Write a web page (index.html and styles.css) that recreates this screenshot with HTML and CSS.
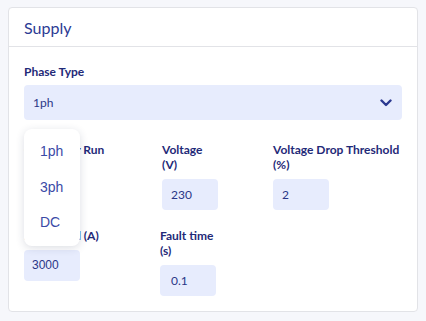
FILE: index.html
```html
<!DOCTYPE html>
<html>
<head>
<meta charset="utf-8">
<link rel="stylesheet" href="styles.css">
</head>
<body>
<div class="card">
  <div class="card-header">Supply</div>
  <div class="card-body">
    <div class="field-phase">
      <div class="label">Phase Type</div>
      <div class="select">
        <span>1ph</span>
        <svg class="chev" width="12" height="8" viewBox="0 0 12 8"><path d="M1.5 1.5 L6 6 L10.5 1.5" fill="none" stroke="#2b3990" stroke-width="2.4" stroke-linecap="round" stroke-linejoin="round"/></svg>
      </div>
      <div class="menu">
        <div class="item">1ph</div>
        <div class="item">3ph</div>
        <div class="item">DC</div>
      </div>
    </div>
    <div class="grid">
      <div class="field">
        <div class="label">Conductor Run</div>
        <div class="input">1</div>
      </div>
      <div class="field">
        <div class="label">Voltage<br>(V)</div>
        <div class="input">230</div>
      </div>
      <div class="field">
        <div class="label">Voltage Drop Threshold<br>(%)</div>
        <div class="input">2</div>
      </div>
      <div class="field">
        <div class="label">Fault Level (A)</div>
        <div class="input">3000</div>
      </div>
      <div class="field shift">
        <div class="label">Fault time<br>(s)</div>
        <div class="input">0.1</div>
      </div>
    </div>
  </div>
</div>
</body>
</html>
```

FILE: styles.css
```css
html, body {
  margin: 0;
  padding: 0;
  background: #f6f7fb;
  font-family: Lato, "Liberation Sans", sans-serif;
}
body {
  padding: 7px 8px 0 8px;
}
.card {
  width: 408px;
  height: 303px;
  background: #fff;
  border: 1px solid #e2e3e7;
  border-radius: 4px;
  box-sizing: content-box;
}
.card-header {
  height: 38px;
  border-bottom: 1px solid #e2e3e7;
  padding-left: 15px;
  font-size: 16px;
  color: #2b3a94;
  line-height: 40px;
}
.card-body {
  padding: 16px 15px 16px 15px;
}
.field-phase {
  position: relative;
  z-index: 2;
}
.label {
  font-size: 12px;
  font-weight: 700;
  color: #1f2a78;
  line-height: 15px;
  white-space: nowrap;
}
.field-phase .label {
  margin-top: 1px;
}
.select {
  margin-top: 6px;
  height: 35px;
  background: #e7ecfd;
  border-radius: 4px;
  display: flex;
  align-items: center;
  justify-content: space-between;
  padding: 0 10px 0 9px;
  font-size: 12px;
  color: #2a3687;
}
.chev {
  margin-top: 1px;
}
.menu {
  position: absolute;
  left: 0;
  top: 65px;
  width: 56px;
  background: #fff;
  border-radius: 8px;
  box-shadow: 0 2px 8px rgba(40, 50, 90, 0.16);
  padding: 5px 0 5px 0;
}
.item {
  height: 35.5px;
  line-height: 35.5px;
  padding-left: 16px;
  font-family: "Liberation Sans", Arial, sans-serif;
  font-size: 14px;
  color: #3b4aa6;
}
.grid {
  margin-top: 22px;
  display: grid;
  grid-template-columns: 137px 112px 1fr;
  row-gap: 18px;
}
.field .label {
  margin-bottom: 7px;
}
.input {
  width: 56px;
  height: 31px;
  background: #e7ecfd;
  border-radius: 4px;
  box-sizing: border-box;
  padding-left: 9px;
  line-height: 31px;
  font-size: 12px;
  color: #2a3687;
}
.field:nth-child(1) .input, .field:nth-child(4) .input {
  font-family: "Liberation Sans", Arial, sans-serif;
  padding-left: 8px;
}
.field:nth-child(2) {
  margin-left: 1px;
}
.shift {
  margin-left: -1px;
}
.shift .input {
  padding-left: 11px;
}
```
